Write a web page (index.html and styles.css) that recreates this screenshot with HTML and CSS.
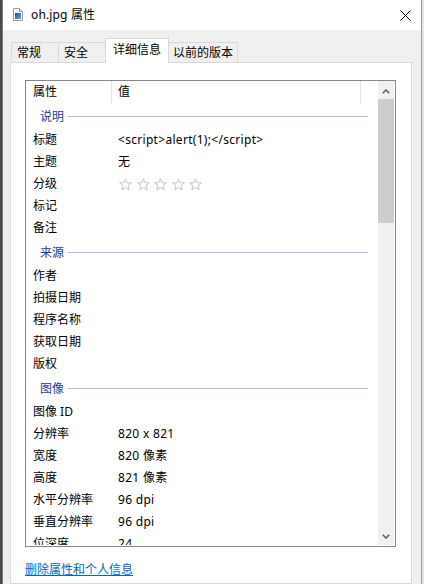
FILE: index.html
```html
<!DOCTYPE html>
<html lang="zh-CN">
<head>
<meta charset="utf-8">
<title>oh.jpg 属性</title>
<link rel="stylesheet" href="styles.css">
</head>
<body>
<div class="desktop">
  <div class="window">
    <div class="titlebar">
      <svg class="file-icon" width="10" height="13" viewBox="0 0 10 13">
        <path d="M0.5 0.5 H6.5 L9.5 3.5 V12.5 H0.5 Z" fill="#fff" stroke="#9a9a9a"/>
        <path d="M6.5 0.5 V3.5 H9.5" fill="none" stroke="#9a9a9a"/>
        <defs><linearGradient id="g" x1="0" y1="0" x2="1" y2="1"><stop offset="0" stop-color="#1c4fa8"/><stop offset="1" stop-color="#5aa9e6"/></linearGradient></defs>
        <rect x="2" y="5" width="6" height="6" fill="url(#g)"/>
      </svg>
      <span class="title">oh.jpg 属性</span>
      <svg class="close" width="11" height="11" viewBox="0 0 11 11">
        <path d="M0.5 0.5 L10.5 10.5 M10.5 0.5 L0.5 10.5" stroke="#000" stroke-width="1" fill="none"/>
      </svg>
    </div>
    <div class="body">
      <div class="tabs">
        <div class="tab">常规</div>
        <div class="tab">安全</div>
        <div class="tab active">详细信息</div>
        <div class="tab tab-last">以前的版本</div>
      </div>
      <div class="panel">
        <div class="list">
          <div class="list-main">
            <div class="header">
              <div class="hcell">属性</div>
              <div class="hdiv"></div>
              <div class="hcell hval">值</div>
              <div class="hdiv"></div>
            </div>
            <div class="group"><span>说明</span><i class="gline"></i></div>
            <div class="row"><span class="k">标题</span><span class="v">&lt;script&gt;alert(1);&lt;/script&gt;</span></div>
            <div class="row"><span class="k">主题</span><span class="v">无</span></div>
            <div class="row"><span class="k">分级</span><span class="v stars">
              <svg class="star" viewBox="0 0 13 13"><path d="M6.5 0.8 L8.1 4.7 L12.3 4.9 L9.1 7.6 L10.1 11.8 L6.5 9.5 L2.9 11.8 L3.9 7.6 L0.7 4.9 L4.9 4.7 Z"/></svg>
              <svg class="star" viewBox="0 0 13 13"><path d="M6.5 0.8 L8.1 4.7 L12.3 4.9 L9.1 7.6 L10.1 11.8 L6.5 9.5 L2.9 11.8 L3.9 7.6 L0.7 4.9 L4.9 4.7 Z"/></svg>
              <svg class="star" viewBox="0 0 13 13"><path d="M6.5 0.8 L8.1 4.7 L12.3 4.9 L9.1 7.6 L10.1 11.8 L6.5 9.5 L2.9 11.8 L3.9 7.6 L0.7 4.9 L4.9 4.7 Z"/></svg>
              <svg class="star" viewBox="0 0 13 13"><path d="M6.5 0.8 L8.1 4.7 L12.3 4.9 L9.1 7.6 L10.1 11.8 L6.5 9.5 L2.9 11.8 L3.9 7.6 L0.7 4.9 L4.9 4.7 Z"/></svg>
              <svg class="star" viewBox="0 0 13 13"><path d="M6.5 0.8 L8.1 4.7 L12.3 4.9 L9.1 7.6 L10.1 11.8 L6.5 9.5 L2.9 11.8 L3.9 7.6 L0.7 4.9 L4.9 4.7 Z"/></svg>
            </span></div>
            <div class="row"><span class="k">标记</span><span class="v"></span></div>
            <div class="row"><span class="k">备注</span><span class="v"></span></div>
            <div class="group"><span>来源</span><i class="gline"></i></div>
            <div class="row"><span class="k">作者</span><span class="v"></span></div>
            <div class="row"><span class="k">拍摄日期</span><span class="v"></span></div>
            <div class="row"><span class="k">程序名称</span><span class="v"></span></div>
            <div class="row"><span class="k">获取日期</span><span class="v"></span></div>
            <div class="row"><span class="k">版权</span><span class="v"></span></div>
            <div class="group"><span>图像</span><i class="gline"></i></div>
            <div class="row"><span class="k">图像 ID</span><span class="v"></span></div>
            <div class="row"><span class="k">分辨率</span><span class="v">820 x 821</span></div>
            <div class="row"><span class="k">宽度</span><span class="v">820 像素</span></div>
            <div class="row"><span class="k">高度</span><span class="v">821 像素</span></div>
            <div class="row"><span class="k">水平分辨率</span><span class="v">96 dpi</span></div>
            <div class="row"><span class="k">垂直分辨率</span><span class="v">96 dpi</span></div>
            <div class="row"><span class="k">位深度</span><span class="v">24</span></div>
            <div class="row"><span class="k">压缩</span><span class="v"></span></div>
          </div>
          <div class="scrollbar">
            <div class="sb-btn sb-up">
              <svg width="8" height="5" viewBox="0 0 8 5"><path d="M0.8 4.2 L4 1 L7.2 4.2" fill="none" stroke="#606060" stroke-width="1.6"/></svg>
            </div>
            <div class="sb-thumb"></div>
            <div class="sb-track"></div>
            <div class="sb-btn sb-down">
              <svg width="8" height="5" viewBox="0 0 8 5"><path d="M0.8 0.8 L4 4 L7.2 0.8" fill="none" stroke="#606060" stroke-width="1.6"/></svg>
            </div>
          </div>
        </div>
        <a class="link" href="#">删除属性和个人信息</a>
      </div>
    </div>
  </div>
</div>
</body>
</html>
```
FILE: styles.css
```css
* { box-sizing: border-box; }
html, body { margin: 0; padding: 0; }
body {
  width: 424px;
  height: 584px;
  overflow: hidden;
  font-family: "Noto Sans", "Noto Sans CJK SC", sans-serif;
  font-size: 12px;
  color: #000;
}
.desktop {
  height: 584px;
  display: flex;
  padding-left: 2px;
  background: linear-gradient(to right, #4a4a4a 0 2px, #e4e4e4 2px);
}
.window {
  width: 420px;
  height: 584px;
  flex: none;
  display: flex;
  flex-direction: column;
  border-left: 1px solid #7a7a7a;
  border-right: 1px solid #9a9a9a;
  background: #f0f0f0;
}
.titlebar {
  height: 30px;
  flex: none;
  background: #fff;
  display: flex;
  align-items: center;
  padding-left: 10px;
}
.file-icon { flex: none; margin-right: 8px; margin-top: -1px; }
.title { font-size: 12px; line-height: 16px; letter-spacing: 0.15px; }
.close { margin-left: auto; margin-right: 10px; }
.body {
  flex: 1;
  display: flex;
  flex-direction: column;
  padding: 8px 0 0 7px;
  min-height: 0;
}
.tabs {
  display: flex;
  align-items: flex-end;
  height: 24px;
  padding-left: 1px;
  position: relative;
  z-index: 1;
  flex: none;
}
.tab {
  height: 20px;
  min-width: 48px;
  padding: 0 5px;
  line-height: 19px;
  border: 1px solid #d9d9d9;
  border-bottom: none;
  background: #f0f0f0;
  white-space: nowrap;
  margin-left: -1px;
}
.tab:first-child { margin-left: 0; }
.tab-last { padding: 0 4px; }
.tab.active {
  height: 25px;
  margin-bottom: -1px;
  padding: 0 7px;
  line-height: 22px;
  background: #fff;
}
.panel {
  width: 402px;
  flex: 1;
  background: #fff;
  border: 1px solid #d9d9d9;
  padding: 17px 0 0 14px;
  display: flex;
  flex-direction: column;
  min-height: 0;
}
.list {
  width: 371px;
  height: 467px;
  flex: none;
  border: 1px solid #828790;
  padding: 0 1px 1px 1px;
  display: flex;
  background: #fff;
}
.list-main {
  flex: 1;
  overflow: hidden;
  min-width: 0;
}
.header {
  height: 22px;
  display: grid;
  grid-template-columns: 84px 1px 248px 1px;
  line-height: 22px;
}
.hcell { padding-left: 6px; }
.hval { padding-left: 6px; }
.hdiv { background: #e5e5e5; }
.group {
  height: 26px;
  display: flex;
  align-items: center;
  padding-left: 13px;
  color: #1e3a8f;
}
.gline {
  flex: 1;
  height: 1px;
  background: #a9bde8;
  margin: 0 10px 0 4px;
}
.row {
  height: 22px;
  display: grid;
  grid-template-columns: 84px 1fr;
  line-height: 22px;
  white-space: nowrap;
}
.k { padding-left: 6px; }
.v { padding-left: 7px; letter-spacing: 0.3px; }
.stars {
  display: flex;
  align-items: center;
  gap: 4.5px;
  padding-left: 8px;
}
.star {
  width: 13px;
  height: 13px;
  fill: #fff;
  stroke: #c3c3c3;
  stroke-width: 1;
}
.scrollbar {
  width: 16px;
  flex: none;
  background: #f0f0f0;
  display: flex;
  flex-direction: column;
}
.sb-btn {
  height: 17px;
  flex: none;
  display: flex;
  justify-content: center;
  align-items: center;
}
.sb-up { padding-top: 3px; }
.sb-down { padding-bottom: 1px; }
.sb-thumb {
  height: 124px;
  margin-top: 1px;
  background: #cdcdcd;
  flex: none;
}
.sb-track { flex: 1; }
.link {
  margin-top: 15px;
  line-height: 16px;
  color: #0066cc;
  text-decoration: underline;
  align-self: flex-start;
}
```
